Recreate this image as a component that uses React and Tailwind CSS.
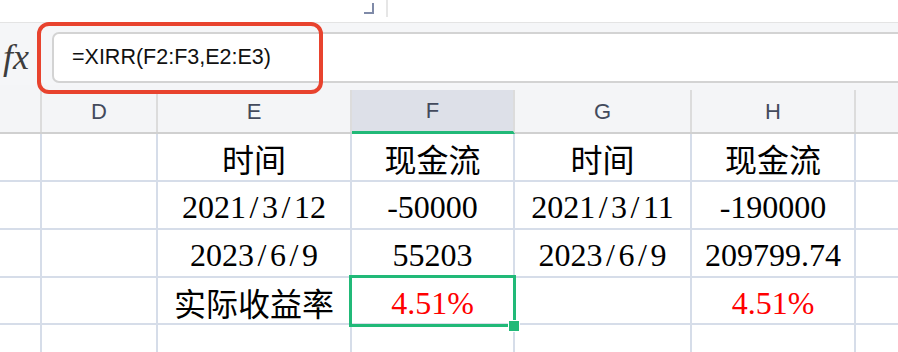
import React from "react";

const cols = "grid grid-cols-[42px_116px_194px_163px_177px_164px_1fr]";
const serif = { fontFamily: '"Liberation Serif", "Noto Sans CJK SC", serif' };

const rows = [
  { h: "h-[48px]", cells: ["", "", "时间", "现金流", "时间", "现金流"], cjk: true },
  { h: "h-[48px]", cells: ["", "", "2021/3/12", "-50000", "2021/3/11", "-190000"] },
  { h: "h-[48px]", cells: ["", "", "2023/6/9", "55203", "2023/6/9", "209799.74"] },
  { h: "h-[47px]", cells: ["", "", "实际收益率", "4.51%", "", "4.51%"], red: [3, 5], selected: 3 },
  { h: "h-[48px]", cells: ["", "", "", "", "", ""] },
];

// slashes in the source font are wider, so pad them out a little
function withSlashes(text) {
  if (!text.includes("/")) return text;
  const parts = text.split("/");
  return parts.map((p, i) => (
    <React.Fragment key={i}>
      {p}
      {i < parts.length - 1 && <span className="mx-[3.5px]">/</span>}
    </React.Fragment>
  ));
}

function Cell({ text, red, selected, last, cjk }) {
  return (
    <div
      className={
        "relative flex items-center justify-center border-b-2 border-[#d6dde9] " +
        (last ? "" : "border-r-2")
      }
    >
      <span
        className={
          "text-[32px] leading-none " +
          (cjk ? "pt-[8px] " : "pt-[4px] ") +
          (red ? "text-[#ff0000]" : "text-black")
        }
        style={serif}
      >
        {text ? withSlashes(text) : null}
      </span>
      {selected && (
        <>
          <div className="absolute z-10 -left-[3px] -top-[3px] -right-[3px] -bottom-[4px] border-[3px] border-[#21b978] pointer-events-none" />
          <div className="absolute z-20 -right-[7px] -bottom-[9px] w-[12px] h-[12px] bg-[#21b978] border border-white" />
        </>
      )}
    </div>
  );
}

export default function App() {
  const letters = ["", "D", "E", "F", "G", "H", ""];
  return (
    <div className="relative w-[898px] h-[352px] overflow-hidden bg-white">
      {/* top strip */}
      <div className="h-[22px] flex">
        <div className="w-[364px]" />
        <svg width="10" height="14" viewBox="0 0 10 14" className="mt-[1px]">
          <path d="M0 12h9V2" fill="none" stroke="#7f8aa8" strokeWidth="2" />
        </svg>
        <div className="w-[12px]" />
        <div className="w-[2px] h-[17px] bg-[#e6e6e6]" />
      </div>
      <div className="h-px bg-[#e4e4e4]" />

      {/* formula bar */}
      <div className="h-[62px] bg-[#f5f6f8] flex">
        <div className="w-[52px] flex items-center pl-[3px] pt-[6px]">
          <span className="italic text-[36px] text-[#3d3d3d] leading-none" style={{ fontFamily: '"Liberation Serif", serif' }}>
            fx
          </span>
        </div>
        <div className="flex-1 -mr-[20px] mt-[9px] h-[51px] bg-white border-2 border-[#d3d3d3] rounded-[7px] flex items-center pl-[18px]">
          <span className="text-[21.5px] text-[#111]" style={{ fontFamily: '"Liberation Sans", Arial, sans-serif' }}>
            =XIRR(F2:F3,E2:E3)
          </span>
        </div>
      </div>

      {/* red highlight around formula */}
      <div className="absolute left-[37px] top-[22px] w-[286px] h-[72px] border-[4px] border-[#e8432e] rounded-[12px]" />

      {/* column header */}
      <div className={cols + " h-[49px] pt-[5px] bg-[#f4f5f7] border-b-2 border-[#d0d0d0]"}>
        {letters.map((l, i) => (
          <div
            key={i}
            className={
              "flex items-center justify-center text-[22px] text-[#434a5c] " +
              (i < 6 ? "border-r-2 border-[#dcdcdc] " : "") +
              (l === "F" ? "bg-[#dde0e8] border-b-[3px] border-b-[#21b978] -mb-[2px]" : "")
            }
            style={{ fontFamily: '"Liberation Sans", Arial, sans-serif' }}
          >
            {l}
          </div>
        ))}
      </div>

      {/* body */}
      {rows.map((r, ri) => (
        <div key={ri} className={cols + " " + r.h}>
          <Cell text="" />
          {r.cells.slice(1).map((c, ci) => {
            const idx = ci + 1;
            return (
              <Cell
                key={ci}
                text={c}
                cjk={r.cjk || (ri === 3 && idx === 2)}
                red={r.red && r.red.includes(idx)}
                selected={r.selected === idx}
              />
            );
          })}
          <Cell text="" last />
        </div>
      ))}
    </div>
  );
}
